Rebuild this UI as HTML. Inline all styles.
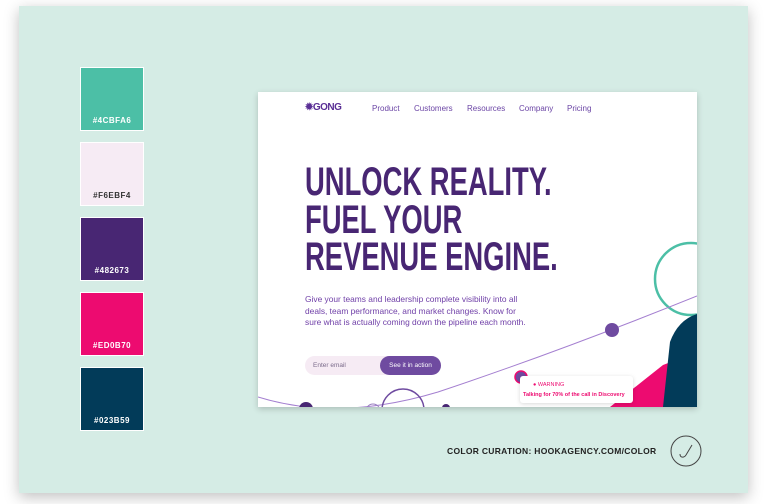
<!DOCTYPE html>
<html><head><meta charset="utf-8"><style>
body{margin:0;width:775px;height:504px;background:#fff;overflow:hidden;position:relative;font-family:"Liberation Sans",sans-serif}
.card{position:absolute;left:19px;top:6px;width:729px;height:487px;background:#d5ece5;box-shadow:0 4px 14px rgba(0,0,0,.25)}
.sw{position:absolute;left:80px;width:62px;height:62px;border:1px solid #fff;color:#fff;font-size:8px;font-weight:bold;letter-spacing:.5px;text-align:center;box-sizing:content-box}
.sw span{position:absolute;bottom:5px;left:0;right:0}
.shot{position:absolute;left:258px;top:92px;width:439px;height:315px;background:#fff;overflow:hidden;box-shadow:0 2px 6px rgba(0,0,0,.2)}
.nav{position:absolute;top:12px;font-size:8px;color:#6b45a5}
h1{position:absolute;left:47px;top:72px;margin:0;font-size:40px;line-height:37.5px;color:#482673;font-weight:bold;transform:scaleX(.685);transform-origin:0 0;white-space:nowrap}
.p{position:absolute;left:47px;top:202px;font-size:8.4px;line-height:11.5px;color:#7040a8;width:228px}
</style></head><body>
<div class="card"></div>
<div class="sw" style="top:67px;background:#4cbfa6"><span>#4CBFA6</span></div>
<div class="sw" style="top:142px;background:#f6ebf4;color:#333"><span>#F6EBF4</span></div>
<div class="sw" style="top:217px;background:#482673"><span>#482673</span></div>
<div class="sw" style="top:292px;background:#ed0b70"><span>#ED0B70</span></div>
<div class="sw" style="top:367px;background:#023b59"><span>#023B59</span></div>
<div style="position:absolute;left:447px;top:446px;font-size:8.5px;font-weight:bold;color:#222;letter-spacing:.3px">COLOR CURATION: HOOKAGENCY.COM/COLOR</div>
<svg style="position:absolute;left:669px;top:434px" width="34" height="34"><circle cx="17" cy="17" r="15" fill="none" stroke="#444" stroke-width="1"/><path d="M11 20c0 4 4 4 6 1l6-10" fill="none" stroke="#444" stroke-width="1"/></svg>
<div class="shot">
<div style="position:absolute;left:47px;top:10px;font-size:10px;font-weight:bold;color:#5a2f95;letter-spacing:-.5px">✹GONG</div>
<div class="nav" style="left:114px">Product</div>
<div class="nav" style="left:156px">Customers</div>
<div class="nav" style="left:209px">Resources</div>
<div class="nav" style="left:261px">Company</div>
<div class="nav" style="left:309px">Pricing</div>
<h1>UNLOCK REALITY.<br>FUEL YOUR<br>REVENUE ENGINE.</h1>
<div class="p">Give your teams and leadership complete visibility into all deals, team performance, and market changes. Know for sure what is actually coming down the pipeline each month.</div>
<div style="position:absolute;left:47px;top:264px;width:136px;height:19px;border-radius:10px;background:#f6ebf4"></div>
<div style="position:absolute;left:55px;top:270px;font-size:6.5px;color:#7a6a8a">Enter email</div>
<div style="position:absolute;left:122px;top:264px;width:61px;height:19px;border-radius:10px;background:#6f4ba0;color:#fff;font-size:6.5px;line-height:19px;text-align:center">See it in action</div>
<svg style="position:absolute;left:0;top:0" width="439" height="315">
<circle cx="433" cy="187" r="36" fill="none" stroke="#4cbfa6" stroke-width="2.5"/>
<polygon points="352,315 405,273 439,260 439,315" fill="#ed0b70"/>
<path d="M405,315 L412,250 Q420,228 439,222 L439,315Z" fill="#023b59"/>
<path d="M0,305 Q80,330 180,300 Q300,260 439,204" fill="none" stroke="#a47fd0" stroke-width="1"/>
<circle cx="354" cy="238" r="7" fill="#6f4ba0"/>
<circle cx="263" cy="285" r="6" fill="#6f4ba0" stroke="#ed0b70" stroke-width="1.5"/>
<circle cx="48" cy="317" r="7" fill="#482673"/>
<circle cx="145" cy="318" r="21" fill="none" stroke="#6f4ba0" stroke-width="1.5"/>
<circle cx="115" cy="319" r="7" fill="none" stroke="#9a80c0" stroke-width="1"/>
<circle cx="188" cy="316" r="4" fill="#482673"/>
<rect x="262" y="284" width="113" height="27" rx="3" fill="#fff" style="filter:drop-shadow(0 1px 2px rgba(0,0,0,.15))"/>
<text x="275" y="294" font-size="5.5" fill="#ed0b70" font-family="Liberation Sans">● WARNING</text>
<text x="265" y="304" font-size="5.5" fill="#ed0b70" font-weight="bold" font-family="Liberation Sans">Talking for 70% of the call in Discovery</text>
</svg>
</div>
</body></html>
